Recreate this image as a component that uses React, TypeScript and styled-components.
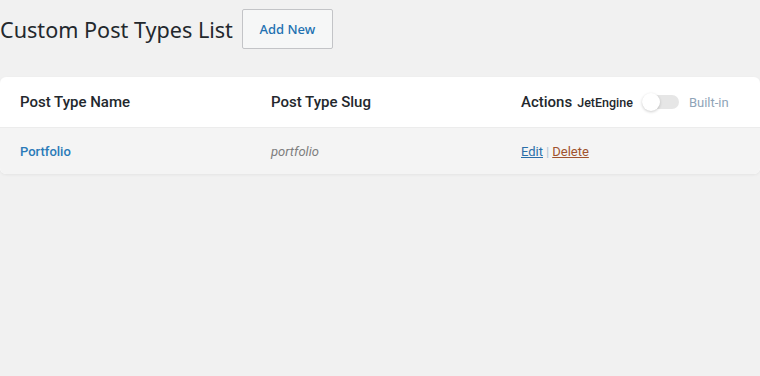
import React from 'react';
import styled, { createGlobalStyle } from 'styled-components';

const GlobalStyle = createGlobalStyle`
  html, body {
    margin: 0;
    padding: 0;
    background: #f1f1f1;
  }
  body {
    font-family: Roboto, "Noto Sans", sans-serif;
    color: #23282d;
  }
`;

const App: React.FC = () => {
  const rows = [{ name: 'Portfolio', slug: 'portfolio' }];
  return (
    <Page>
      <GlobalStyle />
      <TitleBar>
        <Heading>Custom Post Types List</Heading>
        <AddButton>Add New</AddButton>
      </TitleBar>
      <Card>
        <HeadRow>
          <HeadCell>Post Type Name</HeadCell>
          <HeadCell>Post Type Slug</HeadCell>
          <HeadCell>
            Actions
            <SourceLabel>JetEngine</SourceLabel>
            <Toggle>
              <Knob />
            </Toggle>
            <SourceLabel $muted>Built-in</SourceLabel>
          </HeadCell>
        </HeadRow>
        {rows.map(({ name, slug }) => (
          <BodyRow key={slug}>
            <Cell>
              <NameLink>{name}</NameLink>
            </Cell>
            <Cell>
              <Slug>{slug}</Slug>
            </Cell>
            <Cell>
              <ActionLink>Edit</ActionLink>
              <Sep>|</Sep>
              <ActionLink $danger>Delete</ActionLink>
            </Cell>
          </BodyRow>
        ))}
      </Card>
    </Page>
  );
};

export default App;

const Page = styled.div`
  width: 760px;
  height: 376px;
`;
const TitleBar = styled.div`
  display: flex;
  align-items: center;
  gap: 9px;
  padding-top: 9px;
  height: 40px;
`;
const Heading = styled.h1`
  margin: 0;
  font-family: "Noto Sans", "Open Sans", sans-serif;
  font-size: 21.6px;
  font-weight: 400;
  color: #23282d;
  line-height: 1;
  padding-top: 2px;
`;
const AddButton = styled.button`
  box-sizing: border-box;
  width: 91px;
  height: 40px;
  border: 1px solid #c3c4c7;
  border-radius: 2px;
  background: #f6f7f7;
  color: #2271b1;
  font-family: "Noto Sans", "Open Sans", sans-serif;
  font-size: 13px;
  font-weight: 500;
  padding: 0;
`;
const Card = styled.div`
  margin-top: 28px;
  width: 760px;
  background: #fff;
  border-radius: 6px;
  overflow: hidden;
  box-shadow: 0 1px 3px rgba(0, 0, 0, 0.06);
`;
const HeadRow = styled.div`
  display: grid;
  grid-template-columns: 251px 250px 1fr;
  padding-left: 20px;
  height: 50px;
  align-items: center;
  border-bottom: 1px solid #ececec;
`;
const HeadCell = styled.div`
  display: flex;
  align-items: center;
  font-size: 15px;
  font-weight: 500;
  color: #23282d;
`;
const SourceLabel = styled.span<{ $muted?: boolean }>`
  font-size: ${p => (p.$muted ? '13px' : '12.5px')};
  font-weight: ${p => (p.$muted ? 400 : 500)};
  color: ${p => (p.$muted ? '#8fa4b8' : '#23282d')};
  margin-left: ${p => (p.$muted ? '10px' : '5px')};
`;
const Toggle = styled.span`
  position: relative;
  display: inline-block;
  width: 37px;
  height: 14px;
  margin-left: 9px;
  border-radius: 7px;
  background: #e6e6e6;
`;
const Knob = styled.span`
  position: absolute;
  left: 0;
  top: -2px;
  width: 18px;
  height: 18px;
  border-radius: 50%;
  background: #fff;
  box-shadow: 0 1px 3px rgba(0, 0, 0, 0.2);
`;
const BodyRow = styled.div`
  display: grid;
  grid-template-columns: 251px 250px 1fr;
  padding-left: 20px;
  height: 46px;
  align-items: center;
  background: #f4f4f4;
`;
const Cell = styled.div`
  font-size: 13px;
  padding-top: 1px;
`;
const NameLink = styled.span`
  color: #2a7ab8;
  font-weight: 500;
`;
const Slug = styled.span`
  color: #7e7e7e;
  font-style: italic;
`;
const ActionLink = styled.a<{ $danger?: boolean }>`
  color: ${p => (p.$danger ? '#a0522d' : '#2a6ea8')};
  text-decoration: underline;
  cursor: pointer;
`;
const Sep = styled.span`
  color: #b0c4d4;
  margin: 0 3px;
`;
